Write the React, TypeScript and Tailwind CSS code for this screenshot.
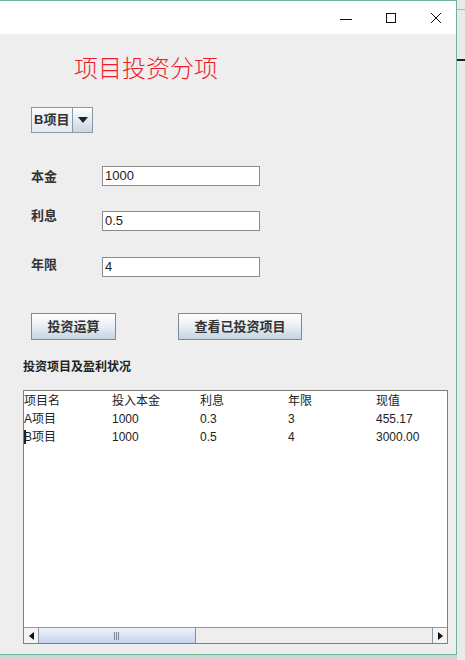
import React from "react";

const cjk = { fontFamily: '"Liberation Sans", "Noto Sans CJK SC", sans-serif' };

const rows = [
  ["项目名", "投入本金", "利息", "年限", "现值"],
  ["A项目", "1000", "0.3", "3", "455.17"],
  ["B项目", "1000", "0.5", "4", "3000.00"],
];

function Field({ label, value, labelShift }: { label: string; value: string; labelShift: string }) {
  return (
    <div className="flex items-center h-[20px]">
      <span className={`w-[71px] text-[13px] font-bold text-[#333] ${labelShift}`}>{label}</span>
      <div className="w-[158px] h-[20px] bg-white border border-[#8c8c8c] flex items-center px-[2px] text-[13px] text-[#222]">
        {value}
      </div>
    </div>
  );
}

function SwingButton({ children, width }: { children: React.ReactNode; width: string }) {
  return (
    <button
      className={`${width} h-[27px] border border-[#7a8a99] bg-gradient-to-b from-[#ffffff] via-[#e9eef4] to-[#c6d3e0] text-[13px] font-bold text-[#333] flex items-center justify-center`}
    >
      {children}
    </button>
  );
}

export default function App() {
  return (
    <div className="w-[465px] h-[660px] bg-[#d4d4d4] flex overflow-hidden" style={cjk}>
      <div className="w-[457px] h-[655px] flex flex-col border-t border-r border-b border-[#6fb39b] shrink-0">
        {/* title bar */}
        <div className="h-[33px] bg-white flex items-center justify-end pr-[14px] gap-[33px] shrink-0">
          <svg width="12" height="12" viewBox="0 0 12 12" className="mt-[2px]">
            <line x1="0" y1="6.5" x2="12" y2="6.5" stroke="#111" strokeWidth="1" />
          </svg>
          <svg width="12" height="12" viewBox="0 0 12 12">
            <rect x="1.5" y="1.5" width="9" height="9" fill="none" stroke="#111" strokeWidth="1" />
          </svg>
          <svg width="12" height="12" viewBox="0 0 12 12">
            <path d="M1 1 L11 11 M11 1 L1 11" stroke="#111" strokeWidth="1" />
          </svg>
        </div>

        {/* content */}
        <div className="flex-1 bg-[#eeeeee] flex flex-col">
          <div className="ml-[74px] mt-[21px] h-[28px] text-[24px] leading-[28px] font-light text-[#ee1c2c]">项目投资分项</div>

          <div className="ml-[31px] mt-[24px] w-[62px] h-[26px] flex border border-[#8a99a8] bg-white">
            <div className="flex-1 flex items-center pl-[2px] text-[13px] font-bold text-[#333] bg-gradient-to-b from-[#f8fafc] to-[#e4e9ef]">
              B项目
            </div>
            <div className="w-[20px] border-l border-[#8a99a8] bg-gradient-to-b from-[#ffffff] to-[#c9d6e3] flex items-center justify-center">
              <svg width="10" height="6" viewBox="0 0 10 6">
                <path d="M0 0 L10 0 L5 6 Z" fill="#222" />
              </svg>
            </div>
          </div>

          <div className="ml-[31px] mt-[33px] flex flex-col">
            <Field label="本金" value="1000" labelShift="mt-[2px]" />
            <div className="h-[25px]" />
            <Field label="利息" value="0.5" labelShift="-mt-[10px]" />
            <div className="h-[26px]" />
            <Field label="年限" value="4" labelShift="-mt-[4px]" />
          </div>

          <div className="ml-[31px] mt-[36px] flex gap-[62px]">
            <SwingButton width="w-[85px]">投资运算</SwingButton>
            <SwingButton width="w-[124px]">查看已投资项目</SwingButton>
          </div>

          <div className="ml-[23px] mt-[20px] text-[12px] font-bold text-[#222] leading-[14px]">投资项目及盈利状况</div>

          <div className="ml-[23px] mt-[16px] w-[425px] h-[254px] border border-[#7f7f7f] bg-white flex flex-col">
            <div className="flex-1 flex flex-col pt-[1px]">
              {rows.map((r, i) => (
                <div key={i} className="flex h-[18px] items-center text-[12px] text-[#222]">
                  {r.map((c, j) => (
                    <div key={j} className="w-[88px] shrink-0 flex items-center">
                      {i === 2 && j === 0 && <span className="w-[2px] h-[14px] bg-[#222] -mr-[2px]" />}
                      {c}
                    </div>
                  ))}
                </div>
              ))}
            </div>
            {/* horizontal scrollbar */}
            <div className="h-[16px] flex border-t border-[#8a99a8] bg-[#eeeeee]">
              <div className="w-[15px] flex items-center justify-center border-r border-[#8a99a8] bg-[#f4f4f4]">
                <svg width="5" height="8" viewBox="0 0 5 8">
                  <path d="M5 0 L5 8 L0 4 Z" fill="#111" />
                </svg>
              </div>
              <div className="w-[157px] border-r border-[#7f8fa0] bg-gradient-to-b from-[#eef3fb] to-[#c5d3ea] flex items-center justify-center">
                <svg width="6" height="8" viewBox="0 0 6 8">
                  <path d="M0.5 0 V8 M2.5 0 V8 M4.5 0 V8" stroke="#7c8794" strokeWidth="1" />
                </svg>
              </div>
              <div className="flex-1 bg-[#eeeeee]" />
              <div className="w-[15px] flex items-center justify-center border-l border-[#8a99a8] bg-[#f4f4f4]">
                <svg width="5" height="8" viewBox="0 0 5 8">
                  <path d="M0 0 L0 8 L5 4 Z" fill="#111" />
                </svg>
              </div>
            </div>
          </div>
        </div>
      </div>

      {/* background behind window */}
      <div className="flex-1 bg-[#eaeaea] flex flex-col">
        <div className="h-[10px] border-b border-[#b0b0b0]" />
        <div className="h-[49px]" />
        <div className="h-[2px] bg-[#222]" />
      </div>
    </div>
  );
}
